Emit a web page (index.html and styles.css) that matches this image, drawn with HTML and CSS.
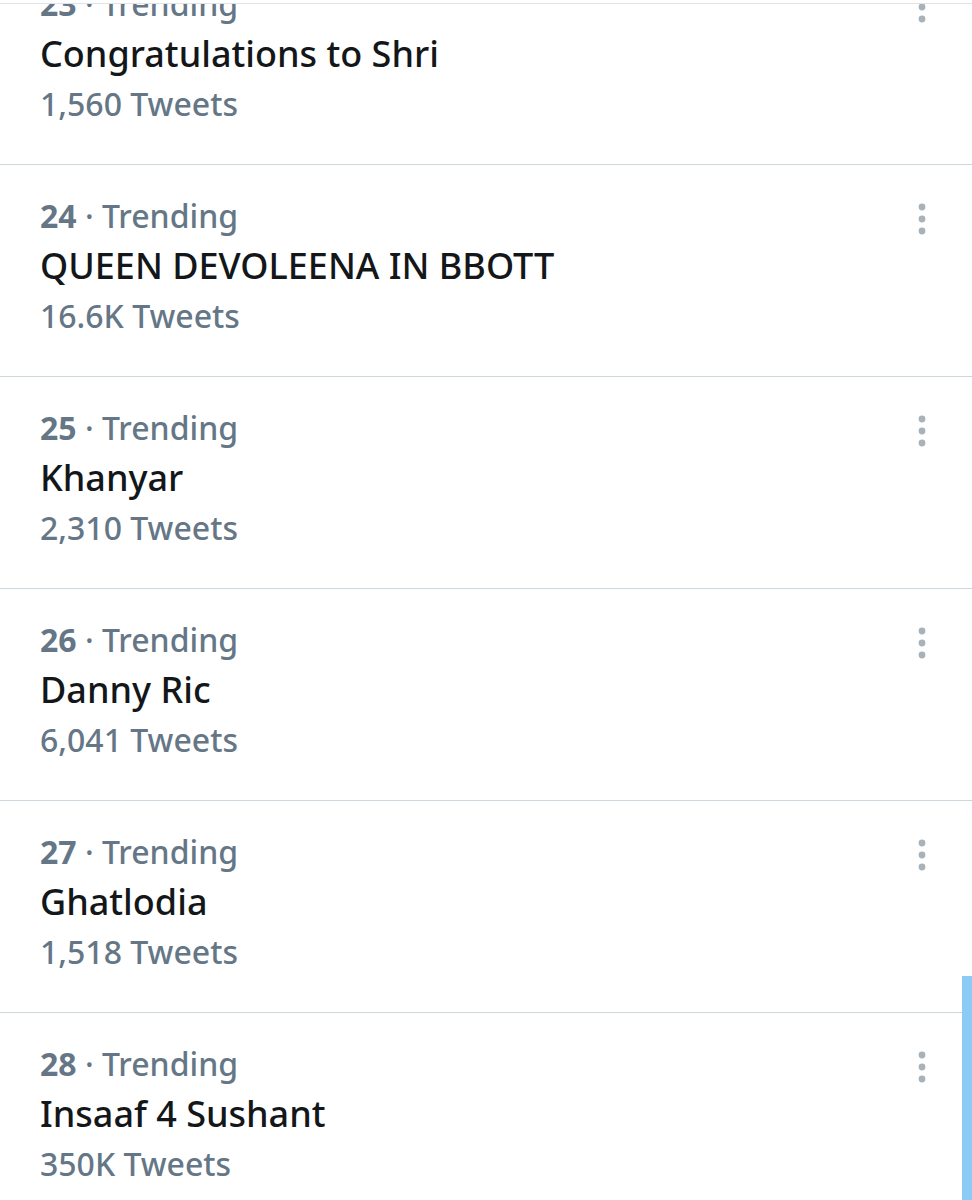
FILE: index.html
```html
<!DOCTYPE html>
<html lang="en">
<head>
<meta charset="utf-8">
<link rel="stylesheet" href="styles.css">
</head>
<body>
<div class="topline"></div>
<ul class="trends">
  <li class="trend">
    <div class="info">
      <div class="meta"><b>23</b> · Trending</div>
      <div class="title">Congratulations to Shri</div>
      <div class="count">1,560 Tweets</div>
    </div>
    <svg class="more" viewBox="0 0 12 36" width="12" height="36"><circle cx="6" cy="4" r="3.4"/><circle cx="6" cy="16" r="3.4"/><circle cx="6" cy="28" r="3.4"/></svg>
  </li>
  <li class="trend">
    <div class="info">
      <div class="meta"><b>24</b> · Trending</div>
      <div class="title">QUEEN DEVOLEENA IN BBOTT</div>
      <div class="count">16.6K Tweets</div>
    </div>
    <svg class="more" viewBox="0 0 12 36" width="12" height="36"><circle cx="6" cy="4" r="3.4"/><circle cx="6" cy="16" r="3.4"/><circle cx="6" cy="28" r="3.4"/></svg>
  </li>
  <li class="trend">
    <div class="info">
      <div class="meta"><b>25</b> · Trending</div>
      <div class="title">Khanyar</div>
      <div class="count">2,310 Tweets</div>
    </div>
    <svg class="more" viewBox="0 0 12 36" width="12" height="36"><circle cx="6" cy="4" r="3.4"/><circle cx="6" cy="16" r="3.4"/><circle cx="6" cy="28" r="3.4"/></svg>
  </li>
  <li class="trend">
    <div class="info">
      <div class="meta"><b>26</b> · Trending</div>
      <div class="title">Danny Ric</div>
      <div class="count">6,041 Tweets</div>
    </div>
    <svg class="more" viewBox="0 0 12 36" width="12" height="36"><circle cx="6" cy="4" r="3.4"/><circle cx="6" cy="16" r="3.4"/><circle cx="6" cy="28" r="3.4"/></svg>
  </li>
  <li class="trend">
    <div class="info">
      <div class="meta"><b>27</b> · Trending</div>
      <div class="title">Ghatlodia</div>
      <div class="count">1,518 Tweets</div>
    </div>
    <svg class="more" viewBox="0 0 12 36" width="12" height="36"><circle cx="6" cy="4" r="3.4"/><circle cx="6" cy="16" r="3.4"/><circle cx="6" cy="28" r="3.4"/></svg>
  </li>
  <li class="trend">
    <div class="info">
      <div class="meta"><b>28</b> · Trending</div>
      <div class="title">Insaaf 4 Sushant</div>
      <div class="count">350K Tweets</div>
    </div>
    <svg class="more" viewBox="0 0 12 36" width="12" height="36"><circle cx="6" cy="4" r="3.4"/><circle cx="6" cy="16" r="3.4"/><circle cx="6" cy="28" r="3.4"/></svg>
  </li>
</ul>
<div class="scrollbar"></div>
</body>
</html>
```
FILE: styles.css
```css
html, body {
  margin: 0;
  padding: 0;
  background: #ffffff;
  overflow: hidden;
}
body {
  font-family: "Noto Sans", "Liberation Sans", sans-serif;
  height: 1200px;
}
.topline {
  position: fixed;
  top: 0;
  left: 0;
  right: 0;
  height: 3px;
  background: #ffffff;
  border-bottom: 1px solid #dfe4e8;
  z-index: 2;
}
.trends {
  list-style: none;
  margin: -47px 0 0 0;
  padding: 0;
}
.trend {
  display: flex;
  justify-content: space-between;
  align-items: flex-start;
  height: 211px;
  box-sizing: content-box;
  border-bottom: 1px solid #ccd6dd;
  padding: 0 44px 0 40px;
}
.info {
  padding-top: 26px;
}
.meta, .count {
  font-size: 32px;
  line-height: 50px;
  color: #657786;
  font-weight: 500;
}
.meta b {
  font-weight: 700;
}
.title {
  font-size: 36px;
  line-height: 50px;
  color: #14171a;
  font-weight: 500;
}
.more {
  margin-top: 38px;
  fill: #aab2b9;
}
.scrollbar {
  position: fixed;
  right: 0;
  top: 976px;
  width: 10px;
  height: 224px;
  background: #8ccbf6;
}
```
